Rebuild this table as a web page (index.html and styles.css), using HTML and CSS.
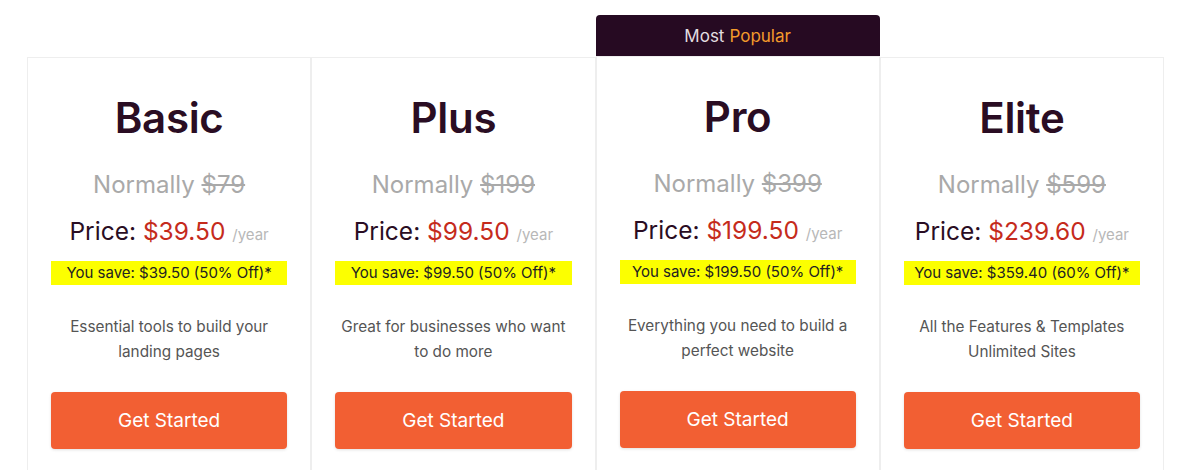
FILE: index.html
```html
<!DOCTYPE html>
<html>
<head>
<meta charset="utf-8">
<link rel="stylesheet" href="styles.css">
</head>
<body>
<div class="pricing">
  <div class="banner">Most <span class="hl">Popular</span></div>

  <div class="card c1">
    <h2 class="title">Basic</h2>
    <div class="normal">Normally <s>$79</s></div>
    <div class="price">Price: <span class="amt">$39.50</span> <span class="per">/year</span></div>
    <div class="save">You save: $39.50 (50% Off)*</div>
    <p class="desc">Essential tools to build your<br>landing pages</p>
    <a class="btn">Get Started</a>
  </div>

  <div class="card c2">
    <h2 class="title">Plus</h2>
    <div class="normal">Normally <s>$199</s></div>
    <div class="price">Price: <span class="amt">$99.50</span> <span class="per">/year</span></div>
    <div class="save">You save: $99.50 (50% Off)*</div>
    <p class="desc">Great for businesses who want<br>to do more</p>
    <a class="btn">Get Started</a>
  </div>

  <div class="card c3 popular">
    <h2 class="title">Pro</h2>
    <div class="normal">Normally <s>$399</s></div>
    <div class="price">Price: <span class="amt">$199.50</span> <span class="per">/year</span></div>
    <div class="save">You save: $199.50 (50% Off)*</div>
    <p class="desc">Everything you need to build a<br>perfect website</p>
    <a class="btn">Get Started</a>
  </div>

  <div class="card c4">
    <h2 class="title">Elite</h2>
    <div class="normal">Normally <s>$599</s></div>
    <div class="price">Price: <span class="amt">$239.60</span> <span class="per">/year</span></div>
    <div class="save">You save: $359.40 (60% Off)*</div>
    <p class="desc">All the Features &amp; Templates<br>Unlimited Sites</p>
    <a class="btn">Get Started</a>
  </div>
</div>
</body>
</html>
```

FILE: styles.css
```css
html, body {
  margin: 0;
  padding: 0;
  background: #fff;
  overflow: hidden;
}
body {
  font-family: Inter, "Noto Sans", "Liberation Sans", sans-serif;
  color: #2a0d23;
}
.pricing {
  display: grid;
  grid-template-columns: repeat(4, 1fr);
  grid-template-rows: 42px auto;
  width: 1137px;
  margin: 15px 0 0 27px;
}
.banner {
  grid-column: 3;
  grid-row: 1;
  background: #260a22;
  border-radius: 4px 4px 0 0;
  color: #e2dde0;
  font-size: 17px;
  display: flex;
  align-items: center;
  justify-content: center;
  margin-bottom: 1px;
}
.banner .hl { color: #f39a2b; margin-left: 5px; }
.card {
  grid-row: 2;
  border: 1px solid #eeeeee;
  padding: 0 23px 40px;
  display: flex;
  flex-direction: column;
  align-items: stretch;
  text-align: center;
}
.c1 { grid-column: 1; }
.c2 { grid-column: 2; }
.c3 { grid-column: 3; }
.c4 { grid-column: 4; }
.popular { margin-top: -1px; }
.title {
  margin: 34px 0 0;
  font-size: 42px;
  font-weight: 600;
  line-height: 52px;
  letter-spacing: -0.3px;
}
.normal {
  margin-top: 26px;
  font-size: 24px;
  line-height: 30px;
  color: #a9a9a9;
}
.normal s { text-decoration-thickness: 1.5px; }
.price {
  margin-top: 16px;
  font-size: 24.5px;
  line-height: 30px;
  color: #2a0d23;
}
.price .amt { color: #c52b1c; }
.price .per { font-size: 15px; color: #b8b8b8; }
.save {
  margin-top: 11px;
  background: #fcff00;
  font-size: 15px;
  line-height: 24px;
  color: #222;
}
.desc {
  margin: 29px 0 0;
  font-size: 15.3px;
  line-height: 25px;
  color: #555;
}
.btn {
  margin-top: 28px;
  display: flex;
  align-items: center;
  justify-content: center;
  height: 57px;
  background: #f25f33;
  color: #fff;
  border-radius: 4px;
  font-size: 19px;
  box-shadow: 0 1px 3px rgba(0,0,0,0.12);
}
```
